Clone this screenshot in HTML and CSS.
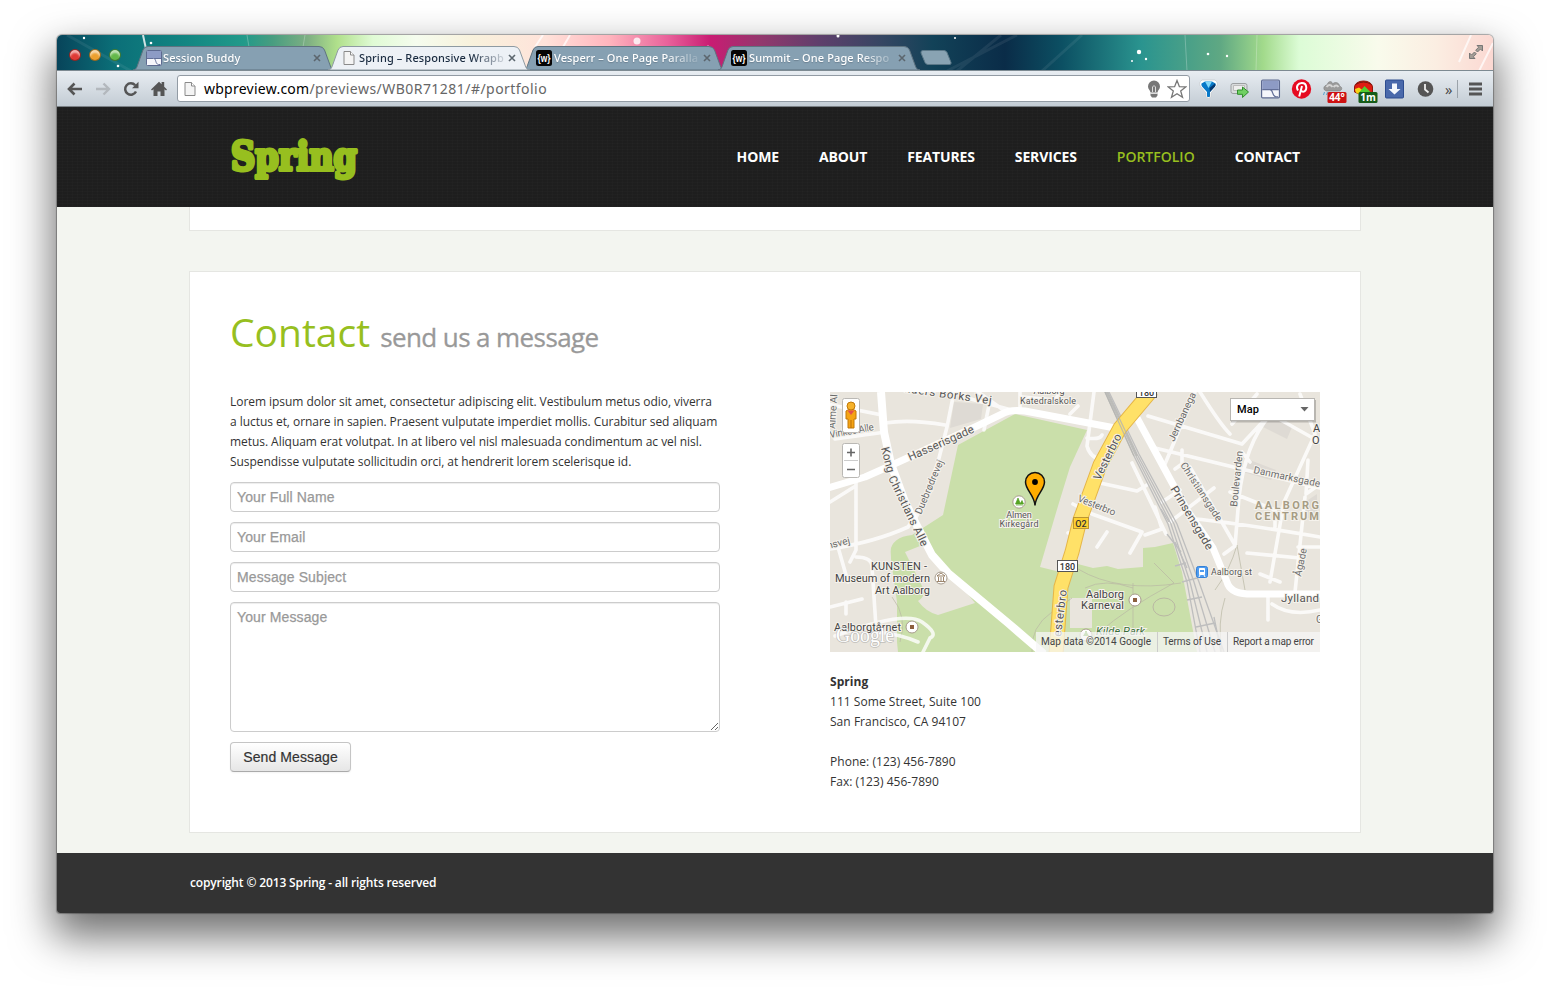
FILE: index.html
```html
<!DOCTYPE html>
<html lang="en">
<head>
<meta charset="utf-8">
<title>Spring – Responsive Wrapbootstrap</title>
<link rel="stylesheet" href="styles.css">
</head>
<body>
<svg width="0" height="0" class="defs">
  <defs>
    <path id="tabshape" d="M0 24 C3 24 4 21 5 18 L10 4 Q11.500 .5 15 .5 H186 Q190 .5 191.500 4 L197 19 C198 22 199 24 202 24 Z"/>
    <g id="page"><path d="M3 1.500h6.500l3.500 3.500v9.500h-10z" fill="#f4f4f4" stroke="#8a8a8a"/><path d="M9.500 1.500v3.500h3.500" fill="#fff" stroke="#8a8a8a"/></g>
    <g id="buddy"><rect x=".5" y=".5" width="15" height="15" rx="1" fill="#f5f6fb" stroke="#5d6a90"/><path d="M1 1h14v7H1z" fill="#8d9bc5"/><path d="M1 8.500h6.500c3 0 1.500 5.500 5 6h2M8 8.500h7" fill="none" stroke="#626f98"/></g>
    <g id="wrap"><rect width="16" height="16" rx="2.500" fill="#050505"/><text x="8" y="11.500" text-anchor="middle" textLength="13" lengthAdjust="spacingAndGlyphs" class="wtext">{w}</text></g>
    <path id="cross" d="M1 1l6 6M7 1l-6 6" stroke="#5c666e" stroke-width="1.600" fill="none"/>
  </defs>
</svg>

<div class="window">
  <div class="titlebar">
    <svg class="sky" width="1436" height="36" viewBox="0 0 1436 36">
      <defs>
        <linearGradient id="aurora">
          <stop offset="0" stop-color="#07445a"/><stop offset=".04" stop-color="#0b6f78"/><stop offset=".09" stop-color="#138682"/><stop offset=".13" stop-color="#229a8a"/>
          <stop offset=".15" stop-color="#489d80"/><stop offset=".175" stop-color="#7fb083"/><stop offset=".195" stop-color="#b0e08b"/><stop offset=".22" stop-color="#e0fbd5"/>
          <stop offset=".25" stop-color="#f5fcee"/><stop offset=".29" stop-color="#f8f1dc"/><stop offset=".34" stop-color="#ffe3da"/><stop offset=".385" stop-color="#ffb4bd"/>
          <stop offset=".425" stop-color="#e9629b"/><stop offset=".455" stop-color="#c91c73"/><stop offset=".49" stop-color="#93386d"/>
          <stop offset=".53" stop-color="#603f6c"/><stop offset=".575" stop-color="#354662"/><stop offset=".61" stop-color="#124258"/><stop offset=".66" stop-color="#0a2c48"/><stop offset=".7" stop-color="#0c5063"/>
          <stop offset=".755" stop-color="#2a948f"/><stop offset=".81" stop-color="#5fa883"/><stop offset=".84" stop-color="#a2da8b"/>
          <stop offset=".865" stop-color="#dcfcd6"/><stop offset=".92" stop-color="#f9fbec"/><stop offset=".96" stop-color="#fbeee2"/><stop offset="1" stop-color="#fbd8d2"/>
        </linearGradient>
      </defs>
      <rect width="1436" height="36" fill="url(#aurora)"/>
      <g stroke="#fff" fill="none">
        <path d="M86 0l3 14" stroke-width="2" opacity=".8"/><path d="M190 0l2 12M248 0l-2 12M1128 0l2 36M1200 0l-1 36" opacity=".25"/>
        <path d="M486 0l-8 12M513 0l-7 12M1414 0l-12 27M1436 8l-14 28" stroke-width="2" opacity=".7"/>
        <path d="M10 0L74 36M890 36l70-36M944 0l-44 36M985 36l40-36" opacity=".07" stroke-width="3"/>
      </g>
      <g fill="#fff"><circle cx="27" cy="3" r="1.200"/><circle cx="94" cy="8" r="1.300"/><circle cx="61" cy="31" r="1.300"/><circle cx="580" cy="6" r="3.500" opacity=".8"/><circle cx="651" cy="12" r="1.500"/><circle cx="781" cy="1" r="1.500"/><circle cx="898" cy="3" r="1"/><circle cx="1082" cy="17" r="2.200"/><circle cx="1089" cy="24" r="1.200"/><circle cx="1075" cy="26" r="1"/><circle cx="1151" cy="19" r="1.300"/><circle cx="1170" cy="21" r="1.200"/></g>
    </svg>
    <div class="lights"><i class="red"></i><i class="amber"></i><i class="green"></i></div>
    <div class="tabs">
      <div class="tab">
        <svg class="shape" width="202" height="24"><use href="#tabshape"/></svg>
        <svg class="fav" width="16" height="16"><use href="#buddy"/></svg><span class="label l1">Session Buddy</span><svg class="close" width="8" height="8"><use href="#cross"/></svg>
      </div>
      <div class="tab active">
        <svg class="shape" width="202" height="24"><use href="#tabshape"/></svg>
        <svg class="fav" width="16" height="16"><use href="#page"/></svg><span class="label l2">Spring – Responsive Wrapb</span><svg class="close" width="8" height="8"><use href="#cross"/></svg>
      </div>
      <div class="tab">
        <svg class="shape" width="202" height="24"><use href="#tabshape"/></svg>
        <svg class="fav" width="16" height="16"><use href="#wrap"/></svg><span class="label l3">Vesperr – One Page Paralla</span><svg class="close" width="8" height="8"><use href="#cross"/></svg>
      </div>
      <div class="tab">
        <svg class="shape" width="202" height="24"><use href="#tabshape"/></svg>
        <svg class="fav" width="16" height="16"><use href="#wrap"/></svg><span class="label l3">Summit – One Page Respo</span><svg class="close" width="8" height="8"><use href="#cross"/></svg>
      </div>
      <svg class="newtab" width="32" height="16"><path d="M3 .5h21q2 0 3 2l4 10q.5 2-1.500 2H8q-2 0-3-2L1 3Q.5.5 3 .5z" fill="#89a3b3" stroke="#5c7888"/></svg>
    </div>
    <svg class="full" width="16" height="16" viewBox="0 0 16 16"><path d="M9 1.500h5.500V7l-2-2-3 3-1.800-1.800 3-3zM7 14.500H1.500V9l2 2 3-3 1.800 1.800-3 3z" fill="#a39d96" stroke="#777"/></svg>
  </div>

  <div class="toolbar">
    <div class="navbtns">
      <svg width="16" height="14" viewBox="0 0 16 14"><path d="M15 7H2M7.500 1.500L2 7l5.500 5.500" fill="none" stroke="#555" stroke-width="2.600"/></svg>
      <svg width="16" height="14" viewBox="0 0 16 14"><path d="M1 7h13M8.500 1.500L14 7l-5.500 5.500" fill="none" stroke="#b3b8bd" stroke-width="2.400"/></svg>
      <svg width="16" height="16" viewBox="0 0 16 16"><path d="M13 10.500A5.700 5.700 0 1 1 12.200 4.300" fill="none" stroke="#555" stroke-width="2.500"/><path d="M15.500.8v6.400H9z" fill="#555"/></svg>
      <svg width="16" height="16" viewBox="0 0 16 16"><path d="M0 8.500L8 .8l2.600 2.500V1h2.600v4.800L16 8.500l-1 1-1.500-1.300V15h-4v-4.500h-3V15h-4V8.200L1 9.500z" fill="#555"/></svg>
    </div>
    <div class="omni">
      <svg width="16" height="16"><use href="#page"/></svg>
      <span class="url"><b>wbpreview.com</b>/previews/WB0R71281/#/portfolio</span>
      <svg width="14" height="18" viewBox="0 0 14 18"><path d="M7 .5a6 6 0 0 1 6 6c0 2.500-2 3.500-2.500 6h-7C3 10 1 9 1 6.500a6 6 0 0 1 6-6zM3.500 13.500h7v2L9 17.500H5l-1.500-2z" fill="#777"/><path d="M5.500 12V7q1.500-3 3 0v5M4 13.500h6" fill="none" stroke="#ddd"/></svg>
      <svg class="star" width="20" height="20" viewBox="0 0 20 20"><path d="M10 1.500l2.400 6.200 6.300.2-5 4 1.800 6.400L10 14.700l-5.500 3.600 1.800-6.400-5-4 6.300-.2z" fill="#fff" stroke="#777" stroke-width="1.300"/></svg>
    </div>
    <div class="exts">
      <svg viewBox="0 0 20 20"><path d="M3.500 1h13q4 3 1.500 6.500L12.500 14v4q-2.500 2.500-5 0v-4L2 7.500Q-.5 4 3.500 1z" fill="#fff" stroke="#c4c8cc" stroke-width=".7"/><path d="M3 4.500L6.500 2.500h7L17 4.500q.5 1.500-.5 3L11.500 13v4.500q-1.500 1-3 0V13L3.500 7.500q-1-1.500-.5-3z" fill="#0879c8"/><path d="M6.500 2.500h7L10 9z" fill="#83d8f8"/><path d="M11 9l5.500-4.500q1 1.500 0 3L11.500 13z" fill="#06386f"/></svg>
      <svg viewBox="0 0 20 20"><rect x="1.500" y="4.500" width="16" height="10" rx="2" fill="#d9dcdd" stroke="#9c9fa1"/><path d="M4 6.500h11v5H4z" fill="#eee" stroke="#bbb"/><path d="M8 11h5V8l6 5-6 5.500v-3.200H8z" fill="#70d063" stroke="#308e2c"/></svg>
      <svg viewBox="0 0 20 20"><g transform="translate(.5 .5) scale(1.190)"><use href="#buddy"/></g></svg>
      <svg viewBox="0 0 20 20"><circle cx="10" cy="10" r="9.700" fill="#e60b21"/><path d="M6.500 11.500C4 7.500 6.500 4 10.300 4c6 0 5.500 8.800 1.300 8.800-1.100 0-1.700-.7-2-1.200M10.500 7L7.700 17.500" fill="none" stroke="#fff" stroke-width="2"/></svg>
      <svg viewBox="0 0 20 20"><path d="M2 11c-2-3 1-5 2.500-5C6 1 10 2 10 5c3-3 7-1 7 2 3 1 3 4 0 5H4z" fill="#9b9b9b" stroke="#777" stroke-width=".5"/><path d="M4 8q3-4 6 0M11 8q3-3 5 0" stroke="#d5d5d5" stroke-width="2" fill="none"/><path d="M2 13l-1 3M5 13l-1 3" stroke="#55a3cf"/><rect x="5" y="13" width="19" height="11" rx="1.500" fill="#cd1111"/><text x="14.500" y="22" text-anchor="middle" class="badge">44°</text></svg>
      <svg viewBox="0 0 20 20"><path d="M1 8a9 6 0 0 1 18 0v5q-9 5-18 0z" fill="#df1c13" stroke="#8d170b"/><path d="M1.500 10l4-1.500 4 3-3 4q-5-1-5-5.500z" fill="#f4d514"/><path d="M6 13l5-6 6 6z" fill="#4fce31"/><path d="M2 5.500q8-5 16 0" fill="none" stroke="#79150f" stroke-width="1"/><rect x="5" y="13" width="19" height="11" rx="1.500" fill="#155c18"/><text x="14.500" y="22" text-anchor="middle" class="badge">1m</text></svg>
      <svg viewBox="0 0 20 20"><rect x="1" y="1" width="18" height="18" rx="1" fill="#4a69ab" stroke="#2d4c8f"/><path d="M7.500 4.500h5V10H16l-6 5.500L4 10h3.500z" fill="#f5f8fd"/></svg>
      <svg viewBox="0 0 20 20"><circle cx="10" cy="10" r="7.800" fill="#555"/><path d="M9.500 5v5.500l3.500 3" fill="none" stroke="#eee" stroke-width="1.800"/></svg>
    </div>
    <span class="more">»</span><i class="sep"></i>
    <svg class="menu" width="13" height="14"><path d="M0 2h13M0 7h13M0 12h13" stroke="#555" stroke-width="2.800"/></svg>
  </div>

  <header class="site">
    <svg class="logo" width="136" height="60"><text x="4" y="40" textLength="126" lengthAdjust="spacingAndGlyphs">Spring</text></svg>
    <nav><a>HOME</a><a>ABOUT</a><a>FEATURES</a><a>SERVICES</a><a class="on">PORTFOLIO</a><a>CONTACT</a></nav>
  </header>

  <main>
    <div class="card prev"></div>
    <section class="card contact">
      <h2>Contact <small>send us a message</small></h2>
      <div class="cols">
        <form>
          <p>Lorem ipsum dolor sit amet, consectetur adipiscing elit. Vestibulum metus odio, viverra<br>a luctus et, ornare in sapien. Praesent vulputate imperdiet mollis. Curabitur sed aliquam<br>metus. Aliquam erat volutpat. In at libero vel nisl malesuada condimentum ac vel nisl.<br>Suspendisse vulputate sollicitudin orci, at hendrerit lorem scelerisque id.</p>
          <input placeholder="Your Full Name"><input placeholder="Your Email"><input placeholder="Message Subject">
          <textarea placeholder="Your Message"></textarea>
          <button type="button">Send Message</button>
        </form>
        <div class="side">
          <svg class="map" width="490" height="260" viewBox="0 0 490 260">
            <rect width="490" height="260" fill="#e9e5dd"/>
            <path d="M128 53L185 22L257 38L240 75L228 114L210 175L242 183L240 170L263 176L277 174L288 177L313 175V156L325 155L343 151L352 180L367 260H67V210L60 160Q62 145 82 143L113 123Z" fill="#cadfaa"/>
            <path d="M75 160l20-8 20 22 30 37-37 12q-12-3-20-14 8-5 5-13zM240 206h22v30h-22zM0 150l60-10 2 60 6 60H0z" fill="#e9e5dd"/>
            <path d="M124 10l29 2-2 15-31 9zM420 68l26 10-5 10-28-8zM432 20l30 15-5 12-28-14zM475 110l12-8v24h-12z" fill="#dedad4"/>
            <path d="M202 260q-2-25 20-40l20-14M248 177q40 24 103 14M255 196q20-10 48 0M303 191v45M270 240q24-22 74-49l-20-20M395 206q-8 25-3 54M385 198q15-20 22-45l8 45M70 250q8-25-8-45" fill="none" stroke="#b9b7a3" stroke-width=".7"/>
            <ellipse cx="334" cy="215" rx="11" ry="9" fill="none" stroke="#b9b7a3"/>
            <g fill="none" stroke="#fff" stroke-linecap="round" stroke-linejoin="round" stroke-width="3.600" opacity=".8">
              <path d="M-3 12L52 23M55 31Q80 27 115 33M124 0L117 35 108 70 94 108 84 130M5 47Q40 42 56 40M26 87V158L20 170M0 157Q45 150 78 135L96 108M26 165Q42 165 42 175L46 235M8 155L18 190M0 215L32 207M16 210V222M5 244Q75 218 92 230T100 246L93 260M46 240Q70 242 88 250M0 110L24 95"/>
              <path d="M148 0L172 17M160 8L154 38M130 4L185 19M190 17V0M192 5L225 8 230 0M240 22l8-8M264 0L257 54Q260 66 273 68M257 46Q270 48 272 43M270 91L307 99 317 93M302 71L336 142M243 112L262 122 312 140 300 161M315 143L332 137 325 115M277 140L267 155M250 137l-12 4"/>
              <path d="M318 24L412 52M325 56L490 96M365 0L335 72M352 58V72L345 77M360 75L405 153M332 110L350 98M340 130L384 96M394 162L405 154 409 105Q415 52 440 23M370 0Q390 32 400 42M412 52L440 22 490 50M412 60L420 70M470 2L485 42 454 110 440 190M400 100L445 118V135M365 127Q400 130 490 145M417 161L470 166M490 155H468M475 105L465 200M438 204V228M430 182L450 190M490 218Q460 225 442 212M402 32l25-30M478 68l-2 34 14-10"/>
            </g>
            <g fill="none" stroke="#bebebe" stroke-width="1.300"><path d="M275 0L303 62 338 132 357 190 370 260"/><path d="M276 0L305 62 341 132 360 190 377 260M278 0L307 62 344 132 364 190 385 260"/><path d="M279 0L309 62 347 132 369 190 394 260"/><path d="M331 117l8 13M337 142l14 18M345 150l12 26M345 174l11-3M352 190l15-4M357 208l15-3M366 235l19-4M384 225l7 35"/></g>
            <g fill="none" stroke="#fff" stroke-linejoin="round"><path d="M-2 96L35 85 62 73 145 35 172 22Q180 17 195 19L285 36" stroke-width="7"/><path d="M51 0L54 40 61 72 75 110 84 128 102 163 118 181 178 231 214 262" stroke-width="8"/><path d="M307 26L340 87 357 118 383 156 397 190Q400 201 417 202H490" stroke-width="7"/></g>
            <path d="M322-2L290 36 270 73 250 128 242 160 231 195 226 262" fill="none" stroke="#e5b548" stroke-width="15"/>
            <path d="M322-2L290 36 270 73 250 128 242 160 231 195 226 262" fill="none" stroke="#ffe168" stroke-width="13"/>
            <path d="M275 0L304 64M277 0L307 64" stroke="#b5b5b0" stroke-width="1.300" opacity=".8"/>
            <g class="st">
              <text transform="translate(80 69) rotate(-24)" textLength="71">Hasserisgade</text>
              <text transform="translate(51 56) rotate(76)" textLength="26">Kong</text>
              <text transform="translate(58 86) rotate(64)" textLength="77">Christians Alle</text>
              <text transform="translate(74 0) rotate(8)" textLength="88">nders Borks Vej</text>
              <text class="s" transform="translate(0 46) rotate(-10)" textLength="45">Vinkes Alle</text>
              <text class="s" transform="translate(5 37) rotate(-86)">Alme Al</text>
              <text class="s" transform="translate(91 123) rotate(-67)" textLength="58">Duebrødrevej</text>
              <text class="s" transform="translate(-2 157) rotate(-14)">nsvej</text>
              <text transform="translate(270 89) rotate(-64)" textLength="50">Vesterbro</text>
              <text class="s" transform="translate(247 109) rotate(22)" textLength="40">Vesterbro</text>
              <text transform="translate(231 245) rotate(-83)" textLength="47">esterbro</text>
              <text class="s" transform="translate(344 50) rotate(-65)">Jernbanega</text>
              <text transform="translate(340 97) rotate(59)" textLength="72">Prinsensgade</text>
              <text class="s" transform="translate(350 73) rotate(57)" textLength="68">Christiansgade</text>
              <text class="s" transform="translate(407 115) rotate(-84)" textLength="56">Boulevarden</text>
              <text class="s" transform="translate(423 81) rotate(12)" textLength="68">Danmarksgade</text>
              <text class="s" transform="translate(471 185) rotate(-78)">Ågade</text>
              <text x="451" y="210" textLength="38">Jylland</text><text class="s" x="486" y="231">G</text>
            </g>
            <g class="poi">
              <text x="219" y="2" text-anchor="middle">Aalborg</text><text x="218" y="12" text-anchor="middle" textLength="56">Katedralskole</text>
              <text x="189" y="126" text-anchor="middle">Almen</text><text x="189" y="135" text-anchor="middle" textLength="39">Kirkegård</text>
              <g class="big"><text x="97" y="178" text-anchor="end" textLength="56">KUNSTEN -</text><text x="100" y="190" text-anchor="end" textLength="95">Museum of modern</text><text x="100" y="202" text-anchor="end" textLength="55">Art Aalborg</text><text x="4" y="239" textLength="67">Aalborgtårnet</text><text x="294" y="206" text-anchor="end" textLength="38">Aalborg</text><text x="294" y="217" text-anchor="end" textLength="43">Karneval</text><text x="266" y="243" textLength="49" class="it">Kilde Park</text><text x="483" y="40">A</text><text x="482" y="52">O</text></g>
              <text x="381" y="183" textLength="41">Aalborg st</text>
              <text x="425" y="117" class="area" textLength="64">AALBORG</text><text x="425" y="128" class="area" textLength="64">CENTRUM</text>
            </g>
            <g fill="#fff" stroke="#a79b8c"><circle cx="111" cy="186" r="6"/><circle cx="82" cy="235" r="6"/><circle cx="305" cy="208" r="6"/><circle cx="189" cy="110" r="6.200"/><circle cx="256" cy="243" r="6"/></g>
            <path d="M107 184l4-3 4 3zM108.500 185v4M111 185v4M113.500 185v4M107 189.500h8" stroke="#846747" stroke-width=".8" fill="none"/><path d="M80 233h4v4h-4zM303 206h4v4h-4z" fill="#8c5f3e"/>
            <path d="M185.500 112l2.500-6 2.500 6zM190 112l2-3.500 1.500 3.500zM186 113h7" fill="#55a322" stroke="#55a322" stroke-width=".7"/><path d="M253 244l3-5 3 5z" fill="#68a936"/>
            <rect x="366.500" y="174.500" width="11" height="11" rx="2" fill="#4f9cf0" stroke="#3480d6"/><path d="M369.500 176.500h5v6h-5zM370 183l-1 2M374 183l1 2" fill="#fff" stroke="#fff"/><path d="M370 178h4v2h-4z" fill="#4f9cf0"/>
            <g class="shield"><rect x="243.500" y="125.500" width="15" height="11" fill="#fed130" stroke="#bc9633"/><text x="251" y="134.500">O2</text><rect x="227.500" y="168.500" width="20" height="11" fill="#fff" stroke="#555"/><text x="237.500" y="177.500">180</text><rect x="306.500" y="-5" width="20" height="10.500" fill="#fff" stroke="#555"/><text x="316.500" y="3.500">180</text></g>
            <path d="M205 113.500C204.500 103 195.500 98 195.500 90a9.500 9.500 0 0 1 19 0C214.500 98 205.500 103 205 113.500z" fill="#ffad00" stroke="#111" stroke-width="1.500"/><circle cx="205" cy="90" r="2.900"/>
            <rect x="206" y="240" width="284" height="20" fill="#f5f5f5" opacity=".75"/><path d="M327.500 240v20M397.500 240v20" stroke="#ccc"/>
            <g class="terms"><text x="211" y="253" textLength="110">Map data ©2014 Google</text><text x="333" y="253" textLength="58">Terms of Use</text><text x="403" y="253" textLength="81">Report a map error</text></g>
            <text x="6" y="250" class="goog" textLength="58" lengthAdjust="spacingAndGlyphs">Google</text>
            <g fill="#fff" stroke="#bab8b4"><rect x="12.500" y="6.500" width="17" height="34" rx="2"/><rect x="12.500" y="51.500" width="17" height="34" rx="2"/><path d="M14 68.500h14" stroke="#ccc"/></g>
            <path d="M17 60.500h8M21 56.500v8M17 77.500h8" stroke="#666" stroke-width="1.600"/>
            <path d="M16 19q5-4 10 0v8h-2v9h-6v-9h-2z" fill="#f5a414" stroke="#c17909"/><circle cx="21" cy="14" r="4" fill="#f6b22a" stroke="#c17909"/><path d="M17.500 18.500h7L21 23z" fill="#e2504f"/><path d="M21 28v8" stroke="#b96f0d"/>
            <path d="M401 29.500h84V8" fill="none" stroke="#0003" stroke-width="2"/><rect x="400.500" y="6.500" width="84" height="22" fill="#fff" stroke="#b8b6b2"/><text x="407" y="21" class="maptype" textLength="22">Map</text><path d="M470.500 15h8l-4 4.500z" fill="#666"/>
          </svg>
          <address><b>Spring</b><br>111 Some Street, Suite 100<br>San Francisco, CA 94107<br><br>Phone: (123) 456-7890<br>Fax: (123) 456-7890</address>
        </div>
      </div>
    </section>
  </main>
  <footer>copyright © 2013 Spring - all rights reserved</footer>
</div>
</body>
</html>
```
FILE: styles.css
```css
* { box-sizing: border-box; }
body { margin: 0; width: 1550px; height: 992px; overflow: hidden; padding: 35px 57px; background: #fff; font: 12px/20px "Open Sans", sans-serif; color: #333; }
.defs { position: absolute; }
svg { display: block; flex: none; }
.window { width: 1436px; height: 878px; display: flex; flex-direction: column; border-radius: 5px 5px 3px 3px; box-shadow: 0 0 1px 1px rgba(0,0,0,.3), 0 20px 42px 4px rgba(0,0,0,.56); background: #f3f5f0; }

.titlebar { position: relative; height: 36px; display: flex; align-items: flex-end; border-radius: 5px 5px 0 0; overflow: hidden; border-bottom: 1px solid #7d8a92; }
.sky { position: absolute; left: 0; top: 0; }
.lights { position: relative; display: flex; gap: 8px; padding: 0 0 9px 12px; width: 76px; }
.lights i { width: 12px; height: 12px; border-radius: 50%; border: 1px solid #0005; box-shadow: inset 0 3px 2px #fff9; }
.red { background: #df3935; }
.amber { background: #eda02f; }
.green { background: #64b94a; }
.tabs { position: relative; display: flex; flex: 1; }
.tab { position: relative; width: 202px; height: 24px; margin-right: -7px; padding-left: 13px; display: flex; align-items: center; }
.tab.active { z-index: 2; }
.tab.active .fav { margin-right: 2px; }
.shape { position: absolute; left: 0; top: 0; fill: #86a0b2; stroke: #5f7380; }
.active .shape { fill: #edf1f6; stroke: #8e9aa2; }
.fav, .close, .label { position: relative; }
.fav { margin-right: 1px; }
.label { width: 148px; white-space: nowrap; overflow: hidden; font: 500 11px/18px "Noto Sans", sans-serif; letter-spacing: .1px; color: #fff; text-shadow: 0 1px 1px #5678; -webkit-mask-image: linear-gradient(90deg, #000 112px, #0002 145px); }
.l3 { padding-left: 1px; }
.active .label { color: #1a2b40; text-shadow: none; }
.l2 { width: 147px; }
.close { margin-left: 2px; }
.wtext { font: bold 10px "Liberation Sans", sans-serif; fill: #fff; }
.newtab { margin: 4px 0 0 7px; }
.full { position: relative; margin: 0 9px 10px 0; }

.toolbar { height: 36px; display: flex; align-items: center; background: linear-gradient(#e8edf2, #c3ccd4); border-bottom: 1px solid #7a8085; }
.navbtns { display: flex; gap: 12px; width: 120px; padding-left: 10px; align-items: center; }
.omni { width: 1013px; height: 27px; display: flex; align-items: center; border: 1px solid #929ba4; border-radius: 3px; background: #fff; padding: 0 2px 0 4px; }
.url { flex: 1; margin-left: 6px; font: 14px/20px "Noto Sans", sans-serif; letter-spacing: .46px; color: #666; }
.url b { font-weight: 400; letter-spacing: .25px; color: #000; }
.star { margin-left: 6px; }
.exts { display: flex; margin-left: 3px; }
.exts svg { width: 31px; height: 20px; overflow: visible; }
.badge { font: bold 10px "Open Sans", sans-serif; fill: #fff; }
.more { width: 12px; margin-left: 4px; font: 15px/20px "Open Sans", sans-serif; color: #444; }
.sep { width: 1px; height: 18px; background: #9ba3aa; margin-right: 11px; }

.site { height: 100px; padding: 0 193px 0 170px; display: flex; align-items: center; justify-content: space-between; background: repeating-linear-gradient(90deg, #ffffff03 0 1px, transparent 1px 5px), repeating-linear-gradient(#ffffff03 0 1px, transparent 1px 3px), #1e1e1e; }
.logo { overflow: visible; margin-top: 5px; }
.logo text { font: bold 39px "DejaVu Serif", serif; fill: #97bf1f; stroke: #97bf1f; stroke-width: 4px; stroke-linejoin: round; }
nav { display: flex; gap: 40px; font-size: 14px; font-weight: 700; letter-spacing: -.13px; color: #fff; }
.on { color: #97bf1f; font-weight: 600; letter-spacing: 0; }

main { height: 646px; padding: 0 132px; }
.card { width: 1172px; background: #fff; border: 1px solid #e5e6e2; }
.prev { height: 24px; border-top: 0; }
.contact { height: 562px; margin-top: 40px; padding: 40px 39px 0 40px; }
h2 { margin: 0; height: 80px; font-size: 39px; line-height: 40px; font-weight: 400; color: #97bf1f; letter-spacing: 0; }
h2 small { font-size: 26px; letter-spacing: -.6px; color: #999; -webkit-text-stroke: .3px #999; }
.cols { display: flex; gap: 110px; }
form { width: 490px; display: flex; flex-direction: column; align-items: flex-start; }
p { margin: 0 0 10px; white-space: nowrap; letter-spacing: -.05px; }
input, textarea { width: 490px; margin: 0 0 10px; padding: 4px 6px; border: 1px solid #ccc; border-radius: 4px; font: 14px/20px "Liberation Sans", Arial, sans-serif; box-shadow: inset 0 1px 1px #00000013; }
input { height: 30px; }
textarea { height: 130px; }
::placeholder { color: #999; letter-spacing: .12px; -webkit-text-stroke: .25px #999; }
button { width: 121px; height: 30px; padding: 0; border: 1px solid #c5c5c5; border-bottom-color: #aaa; border-radius: 4px; background: linear-gradient(#fff, #e6e6e6); font: 14px "Liberation Sans", Arial, sans-serif; letter-spacing: .1px; color: #333; -webkit-text-stroke: .2px #333; box-shadow: 0 1px 2px #0000000d; }
address { margin-top: 20px; font-style: normal; letter-spacing: .04px; }
.st text { font: 11.500px Roboto, sans-serif; fill: #555; stroke: #f5f2ec; stroke-width: 2px; paint-order: stroke; }
.st .s { font-size: 10px; fill: #6b6b6b; }
.poi text { font: 9px Roboto, sans-serif; fill: #555; stroke: #f5f2ec; stroke-width: 2px; paint-order: stroke; }
.poi .big text { font-size: 11px; fill: #444; }
.poi .big .it { font-style: italic; fill: #376e37; }
.poi .area { font-size: 11px; font-weight: 700; fill: #a69c84; }
.shield text { font: 500 9px Roboto, sans-serif; fill: #333; text-anchor: middle; }
.terms text { font: 10px Roboto, sans-serif; fill: #444; }
.goog { font: 20px "Liberation Serif", serif; fill: #fff; stroke: #9998; stroke-width: 1.500px; paint-order: stroke; }
.maptype { font: 500 11px Roboto, sans-serif; fill: #000; }
footer { height: 60px; padding: 20px 133px; background: #333; color: #fff; font-weight: 600; letter-spacing: -.14px; border-radius: 0 0 3px 3px; }
```
